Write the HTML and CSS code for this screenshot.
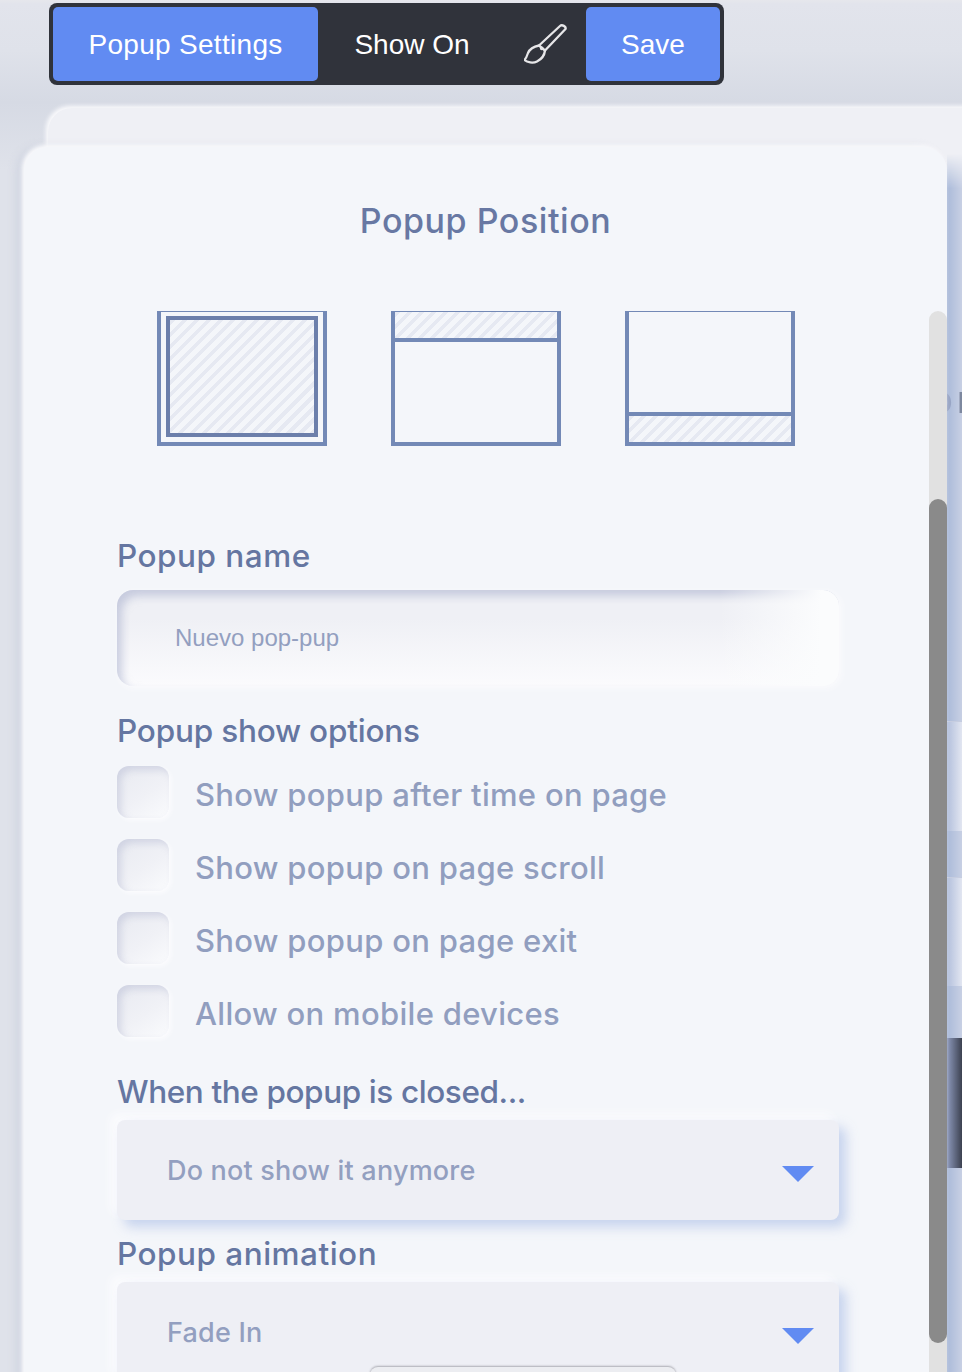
FILE: index.html
```html
<!DOCTYPE html>
<html lang="en">
<head>
<meta charset="utf-8">
<title>Popup Settings</title>
<link rel="stylesheet" href="styles.css">
</head>
<body>
<div class="stage">
  <nav class="toolbar">
    <button class="tab tab-primary tab-settings">Popup Settings</button>
    <button class="tab tab-plain">Show On</button>
    <span class="brush">
      <svg width="44" height="40" viewBox="0 0 44 40" fill="none" stroke="#e6e6e8" stroke-width="2.300" stroke-linejoin="round" stroke-linecap="round">
        <path d="M36 2c2-1.800 6.500.5 5.500 3L21 26.500 15 21.500z"/>
        <path d="M15 21.500C10 22.500 5.500 25.500 4 29c-1 3-2 5.500-3.500 7 2.500 2.500 8.500 3.500 12.500 1.500 4-2 7.500-6.500 8-11"/>
        <circle cx="17.700" cy="24.300" r=".7"/>
      </svg>
    </span>
    <button class="tab tab-primary tab-save">Save</button>
  </nav>

  <div class="back-card"></div>

  <div class="side-strip">
    <span class="side-letters"><span class="letter-faint">O</span>P</span>
    <span class="row row-base row-a"></span>
    <span class="row row-light row-b"></span>
    <span class="row row-base row-c"></span>
    <span class="row row-light row-d"></span>
    <span class="row row-base row-e"></span>
    <span class="row row-dark row-f"></span>
    <span class="row row-base row-g"></span>
  </div>

  <main class="card">
    <h1 class="card-title">Popup Position</h1>

    <div class="positions">
      <div class="pos pos-full"><div class="hatch"></div></div>
      <div class="pos pos-top"><div class="hatch"></div></div>
      <div class="pos pos-bottom"><div class="hatch"></div></div>
    </div>

    <label class="field-label name-label">Popup name</label>
    <div class="input">Nuevo pop-pup</div>

    <h2 class="field-label options-label">Popup show options</h2>
    <ul class="checks">
      <li class="check"><span class="box"></span><span class="check-text">Show popup after time on page</span></li>
      <li class="check"><span class="box"></span><span class="check-text">Show popup on page scroll</span></li>
      <li class="check"><span class="box"></span><span class="check-text">Show popup on page exit</span></li>
      <li class="check"><span class="box"></span><span class="check-text">Allow on mobile devices</span></li>
    </ul>

    <h2 class="field-label closed-label">When the popup is closed...</h2>
    <div class="select"><span>Do not show it anymore</span><i class="caret"></i></div>

    <h2 class="field-label anim-label">Popup animation</h2>
    <div class="select"><span>Fade In</span><i class="caret"></i></div>

    <div class="peek"></div>
    <div class="scrollbar"><div class="thumb"></div></div>
  </main>
</div>
</body>
</html>
```
FILE: styles.css
```css
* { box-sizing: border-box; }
html, body { margin: 0; height: 100%; }
body {
  font-family: Inter, "Noto Sans", "Liberation Sans", sans-serif;
  overflow: hidden;
  background: #dfe2ea;
}
.stage {
  position: relative;
  width: 962px;
  height: 1372px;
  overflow: hidden;
  padding-top: 3px;
  background: linear-gradient(180deg, #e6e7ec 0, #e2e4ec 4px, #dfe2ea 50px, #d6dae4 102px, #dfe2ea 170px);
}
.toolbar {
  display: flex;
  align-items: stretch;
  margin-left: 49px;
  width: 675px;
  height: 82px;
  padding: 4px;
  background: #30333b;
  border-radius: 8px;
}
.tab {
  border: 0;
  padding: 2px 0 0;
  font: 28px/1 "Liberation Sans", Arial, sans-serif;
  color: #fff;
  background: transparent;
}
.tab-primary { background: #618bf2; border-radius: 5px; }
.tab-settings { width: 265px; letter-spacing: .3px; }
.tab-plain { width: 188px; }
.tab-save { width: 134px; margin-left: auto; }
.brush { flex: 1; display: flex; align-items: center; justify-content: center; }

.back-card {
  position: absolute;
  left: 48px;
  top: 108px;
  width: 940px;
  height: 260px;
  background: #eff0f5;
  border-radius: 24px 0 0 0;
  box-shadow: -2px -2px 4px #fbfbfd;
}
.card {
  position: absolute;
  left: 24px;
  top: 147px;
  width: 923px;
  height: 1300px;
  background: #f4f6fa;
  border-radius: 24px;
  box-shadow: -2px -2px 4px #fbfbfd, -8px 0 10px rgba(190, 197, 215, .45);
  padding-left: 93px;
}
.card-title {
  margin: 0 0 0 -93px;
  width: 923px;
  height: 164px;
  padding-top: 54px;
  text-align: center;
  font-size: 34px;
  line-height: 40px;
  font-weight: 450;
  letter-spacing: .55px;
  color: #6878a3;
}
.positions {
  display: flex;
  gap: 64px;
  margin-left: 40px;
  height: 135px;
}
.pos {
  width: 170px;
  height: 135px;
  border: 4px solid #7389b6;
  border-top-width: 1px;
  display: flex;
  flex-direction: column;
  filter: blur(.4px);
}
.hatch {
  background-color: #f4f6fa;
  background-image: repeating-linear-gradient(135deg, #e6e9f2 0 4px, #f4f6fa 4px 8.500px);
}
.pos-full { padding: 4px 5px 5px; }
.pos-full .hatch { flex: 1; border: 4px solid #6c7fab; }
.pos-top .hatch { height: 30px; border-bottom: 4px solid #7389b6; }
.pos-bottom { justify-content: flex-end; }
.pos-bottom .hatch { height: 30px; border-top: 4px solid #7389b6; }

.field-label {
  display: block;
  margin: 0;
  font-size: 31.500px;
  line-height: 36px;
  font-weight: 450;
  color: #6576a1;
}
.name-label { margin-top: 92px; letter-spacing: .5px; }
.input {
  position: relative;
  width: 722px;
  height: 96px;
  margin-top: 16px;
  padding-left: 58px;
  border-radius: 16px;
  display: flex;
  align-items: center;
  font: 24px/1 "Liberation Sans", Arial, sans-serif;
  color: #939fc0;
  background: linear-gradient(180deg, #eff0f5 30%, #fbfbfd 100%);
  box-shadow: inset 5px 6px 9px rgba(172, 178, 206, .6), 2px 2px 6px #fbfbfd;
}
.input::after {
  content: "";
  position: absolute;
  top: 0;
  right: 0;
  bottom: 0;
  width: 120px;
  border-radius: 0 16px 16px 0;
  background: linear-gradient(90deg, rgba(251, 252, 253, 0), #fbfcfd 85%);
}
.options-label { margin-top: 27px; letter-spacing: -.2px; }
.checks {
  list-style: none;
  margin: 17px 0 0;
  padding: 0;
  display: flex;
  flex-direction: column;
  gap: 21px;
}
.check {
  display: flex;
  align-items: center;
  gap: 26px;
  height: 52px;
  font-size: 31px;
  font-weight: 450;
  letter-spacing: .3px;
  color: #919ebf;
}
.check-text { padding-top: 5px; }
.box {
  width: 52px;
  height: 52px;
  border-radius: 12px;
  background: linear-gradient(145deg, #e8eaf1, #f0f1f6 55%, #fafbfd);
  box-shadow: inset 4px 4px 7px rgba(172, 178, 206, .4), 2px 2px 4px #fcfcfe;
}
.closed-label { margin-top: 37px; letter-spacing: -.4px; }
.select {
  width: 722px;
  height: 100px;
  margin-top: 10px;
  padding: 0 25px 0 50px;
  border-radius: 8px;
  display: flex;
  align-items: center;
  justify-content: space-between;
  background: #eeeff5;
  font-size: 27px;
  font-weight: 450;
  letter-spacing: .2px;
  color: #939fc0;
  box-shadow: 7px 7px 12px rgba(180, 196, 232, .7), -6px -6px 10px #fcfcfe;
}
.caret {
  width: 0;
  height: 0;
  border-left: 16px solid transparent;
  border-right: 16px solid transparent;
  border-top: 16px solid #618bf2;
  margin-top: 8px;
}
.anim-label { margin-top: 16px; letter-spacing: .5px; }
.peek {
  position: absolute;
  left: 346px;
  top: 1220px;
  width: 306px;
  height: 40px;
  border-radius: 8px;
  background: #ecedf1;
  box-shadow: 0 -1px 2px rgba(90, 90, 100, .45);
}
.scrollbar {
  position: absolute;
  left: 905px;
  top: 164px;
  width: 18px;
  height: 1135px;
  border-radius: 9px;
  background: #e1e1e1;
  padding-top: 188px;
}
.thumb {
  width: 18px;
  height: 844px;
  border-radius: 9px;
  background: #8a8a8a;
}
.side-strip {
  position: absolute;
  left: 947px;
  top: 146px;
  width: 15px;
  height: 1226px;
  display: flex;
  flex-direction: column;
  overflow: hidden;
  -webkit-mask-image: linear-gradient(180deg, transparent 8px, #000 42px);
  mask-image: linear-gradient(180deg, transparent 8px, #000 42px);
}
.row { display: block; flex: none; }
.row-base { background: linear-gradient(90deg, #aabad9, #c8d0e4); }
.row-light { background: linear-gradient(90deg, #b2bfdc, #e2e6f1); border-top: 1px solid #c6cde0; }
.row-dark { background: linear-gradient(90deg, #8d99bb, #3c4150); }
.row-a { height: 575px; }
.row-b { height: 110px; }
.row-c { height: 46px; }
.row-d { height: 109px; }
.row-e { height: 52px; }
.row-f { height: 130px; }
.row-g { height: 204px; }
.side-letters {
  position: absolute;
  left: -16px;
  top: 243px;
  font-size: 28px;
  line-height: 28px;
  font-weight: 600;
  letter-spacing: 5px;
  white-space: nowrap;
  color: #7d889f;
  z-index: 1;
}
.letter-faint { color: #98a5c5; }
```
